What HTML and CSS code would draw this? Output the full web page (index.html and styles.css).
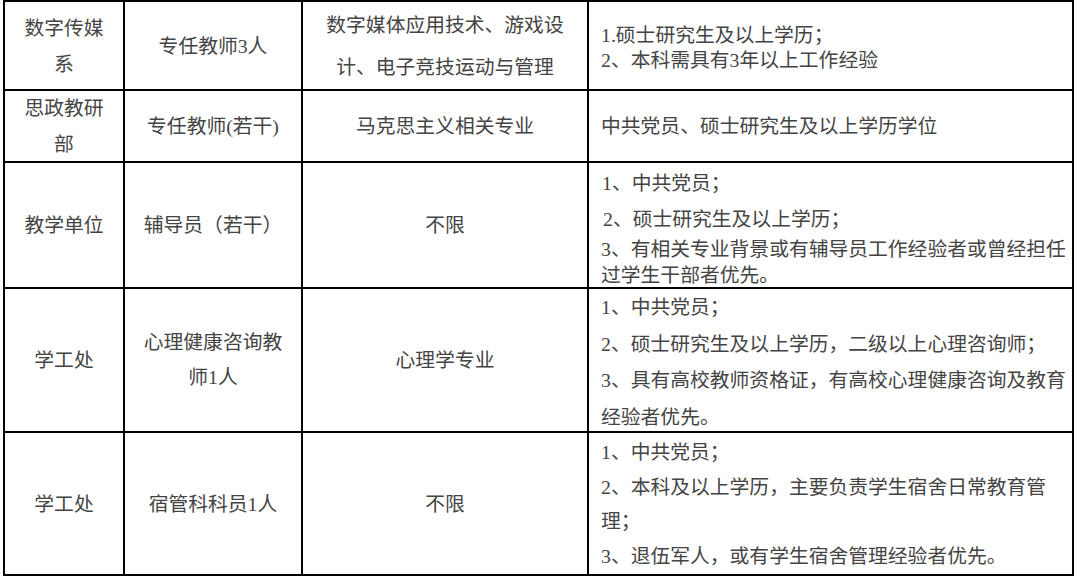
FILE: index.html
```html
<!DOCTYPE html>
<html lang="zh-CN">
<head>
<meta charset="utf-8">
<title>岗位需求表</title>
<link rel="stylesheet" href="styles.css">
</head>
<body>
<div class="sheet">
  <div class="cell c lh36">数字传媒<br>系</div>
  <div class="cell c">专任教师3人</div>
  <div class="cell c lh42">数字媒体应用技术、游戏设<br>计、电子竞技运动与管理</div>
  <div class="cell l r1">
    <p>1.硕士研究生及以上学历；</p>
    <p>2、本科需具有3年以上工作经验</p>
  </div>

  <div class="cell c lh36">思政教研<br>部</div>
  <div class="cell c">专任教师(若干)</div>
  <div class="cell c">马克思主义相关专业</div>
  <div class="cell l r2">
    <p>中共党员、硕士研究生及以上学历学位</p>
  </div>

  <div class="cell c">教学单位</div>
  <div class="cell c">辅导员（若干）</div>
  <div class="cell c">不限</div>
  <div class="cell l r3">
    <p class="in2">1、中共党员；</p>
    <p class="in3 gap">2、硕士研究生及以上学历；</p>
    <p class="gap-s">3、有相关专业背景或有辅导员工作经验者或曾经担任<br>过学生干部者优先。</p>
  </div>

  <div class="cell c">学工处</div>
  <div class="cell c lh35">心理健康咨询教<br>师1人</div>
  <div class="cell c">心理学专业</div>
  <div class="cell l r4">
    <p>1、中共党员；</p>
    <p>2、硕士研究生及以上学历，二级以上心理咨询师；</p>
    <p>3、具有高校教师资格证，有高校心理健康咨询及教育<br>经验者优先。</p>
  </div>

  <div class="cell c">学工处</div>
  <div class="cell c">宿管科科员1人</div>
  <div class="cell c">不限</div>
  <div class="cell l r5">
    <p>1、中共党员；</p>
    <p>2、本科及以上学历，主要负责学生宿舍日常教育管<br>理；</p>
    <p>3、退伍军人，或有学生宿舍管理经验者优先。</p>
  </div>
</div>
</body>
</html>
```

FILE: styles.css
```css
html, body {
  margin: 0;
  padding: 0;
  background: #ffffff;
}

body {
  font-family: "Liberation Serif", "Noto Sans CJK SC", serif;
  font-size: 19.8px;
  color: #444444;
}

.sheet {
  display: grid;
  grid-template-columns: 120px 178px 286px 485px;
  grid-template-rows: 89px 72px 126px 144px 143px;
  margin-left: 3px;
  width: max-content;
  border-left: 2px solid #000;
  border-top: 2px solid #000;
}

.cell {
  box-sizing: border-box;
  border-right: 2px solid #000;
  border-bottom: 2px solid #000;
  white-space: nowrap;
  overflow: hidden;
}

.cell p {
  margin: 0;
}

.c {
  display: flex;
  align-items: center;
  justify-content: center;
  text-align: center;
  line-height: 24px;
}

.lh36 { line-height: 36px; }
.lh42 { line-height: 42px; }
.lh35 { line-height: 35px; }

.l {
  padding-left: 12px;
  text-align: left;
}

.r1 {
  display: flex;
  flex-direction: column;
  justify-content: center;
  line-height: 25px;
  padding-top: 4px;
}

.r2 {
  display: flex;
  flex-direction: column;
  justify-content: center;
  line-height: 24px;
}

.r3 {
  line-height: 26px;
  padding-top: 7px;
}

.r3 .gap { margin-top: 10px; }
.r3 .gap-s { margin-top: 4px; }
.in2 { padding-left: 1px; }
.in3 { padding-left: 2px; }

.r4 {
  line-height: 36.5px;
  padding-top: 0;
}

.r5 {
  line-height: 34.5px;
  padding-top: 2px;
}
```
